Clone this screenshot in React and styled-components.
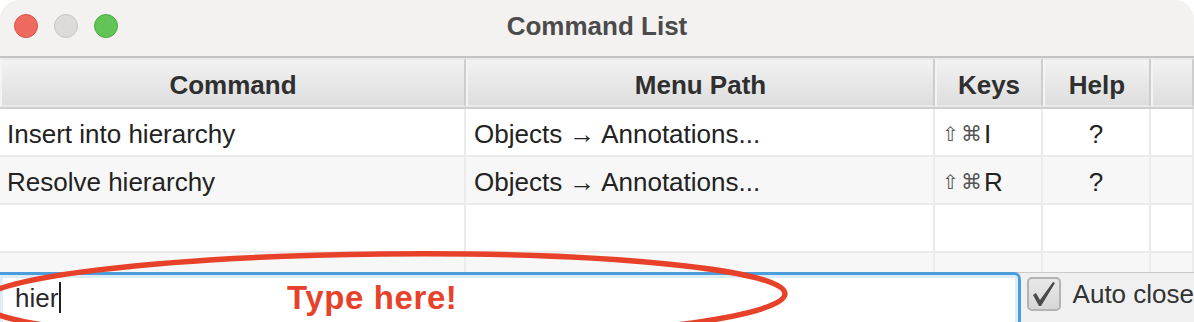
import React from "react";
import styled, { createGlobalStyle } from "styled-components";

const Global = createGlobalStyle`
  html, body { margin: 0; padding: 0; background: #ffffff; }
  body { font-family: "Liberation Sans", Arial, "DejaVu Sans", sans-serif; }
  * { box-sizing: border-box; }
`;

const Window = styled.div`
  position: relative;
  width: 1194px;
  height: 322px;
  overflow: hidden;
  display: flex;
  flex-direction: column;
  background: #f2f1f0;
  border-radius: 20px 20px 0 0;
`;

const TitleBar = styled.div`
  position: relative;
  height: 58px;
  flex: none;
  display: flex;
  align-items: center;
  justify-content: center;
  background: #f3f2f1;
  border-bottom: 2px solid #c3c3c3;
`;

const Lights = styled.div`
  position: absolute;
  left: 14px;
  top: 14px;
  display: flex;
  gap: 16px;
`;

const Light = styled.span`
  width: 24px;
  height: 24px;
  border-radius: 50%;
  background: ${(p) => p.$bg};
  border: 1px solid ${(p) => p.$bd};
`;

const Title = styled.div`
  font-size: 26px;
  font-weight: 700;
  color: #4b4b4b;
  margin-top: -3px;
`;

const TableArea = styled.div`
  height: 214px;
  flex: none;
  overflow: hidden;
  background: #ffffff;
`;

const cols = "466px 469px 108px 108px 1fr";

const HeaderRow = styled.div`
  display: grid;
  grid-template-columns: ${cols};
  height: 51px;
  border-bottom: 2px solid #cfcfcf;
  background: #d9d9d9;
`;

const HeaderCell = styled.div`
  display: flex;
  align-items: center;
  justify-content: center;
  font-size: 26px;
  font-weight: 700;
  color: #2f2f2f;
  background: linear-gradient(#f2f2f2, #dedede);
  border: 2px solid #e9e9e9;
  border-left-color: #f4f4f4;
  border-right: 2px solid #cdcdcd;
  padding-top: 5px;
`;

const BodyRow = styled.div`
  display: grid;
  grid-template-columns: ${cols};
  height: 48px;
  background: ${(p) => (p.$alt ? "#f7f7f7" : "#ffffff")};
  border-bottom: 2px solid #ebebeb;
`;

const Cell = styled.div`
  display: flex;
  align-items: center;
  justify-content: ${(p) => (p.$center ? "center" : "flex-start")};
  padding-left: ${(p) => (p.$center ? "0" : p.$pad || "7px")};
  padding-top: 4px;
  font-size: 26px;
  color: #222;
  border-right: 2px solid #ebebeb;
  white-space: pre;
  overflow: hidden;
`;

const Keys = styled.span`
  display: inline-flex;
  align-items: center;
`;

const KeySym = styled.span`
  font-family: "DejaVu Sans", sans-serif;
  font-size: ${(p) => p.$size || "22px"};
  font-weight: 300;
  color: #555;
  margin-right: 2px;
`;

const BottomBar = styled.div`
  height: 50px;
  flex: none;
  display: flex;
  align-items: flex-start;
  background: #f0f0f0;
  border-top: 1px solid #c8c8c8;
`;

const Field = styled.div`
  position: relative;
  width: 1024px;
  height: 56px;
  margin-left: -3px;
  margin-top: -1px;
  display: flex;
  align-items: flex-start;
  padding: 8px 0 0 15px;
  background: #ffffff;
  border: 3px solid #4b9edb;
  border-radius: 0 7px 7px 0;
  box-shadow: inset 0 0 0 3px #dcedf8;
  font-size: 26px;
  color: #2a2a2a;
`;

const Caret = styled.span`
  display: inline-block;
  width: 2px;
  height: 31px;
  margin-left: 1px;
  margin-top: -1px;
  background: #1f1f1f;
`;

const CheckWrap = styled.label`
  display: flex;
  align-items: center;
  gap: 12px;
  margin-left: 6px;
  margin-top: 4px;
  font-size: 26px;
  color: #333;
  white-space: nowrap;
`;

const CheckBox = styled.span`
  width: 34px;
  height: 34px;
  border-radius: 5px;
  border: 2px solid #b3b3b3;
  background: linear-gradient(#e9e9e9, #d6d6d6);
  display: flex;
  align-items: center;
  justify-content: center;
`;

const Overlay = styled.svg`
  position: absolute;
  left: 0;
  top: 0;
  pointer-events: none;
`;

const Callout = styled.div`
  position: absolute;
  left: 287px;
  top: 279px;
  font-size: 33px;
  font-weight: 700;
  color: #e8412a;
  letter-spacing: 0.6px;
  white-space: nowrap;
`;

const rows = [
  { cmd: "Insert into hierarchy", path: "Objects \u2192 Annotations...", key: "I" },
  { cmd: "Resolve hierarchy", path: "Objects \u2192 Annotations...", key: "R" },
  null,
  null,
];

export default function App() {
  return (
    <>
      <Global />
      <Window>
        <TitleBar>
          <Lights>
            <Light $bg="#ee6a5f" $bd="#d9534a" />
            <Light $bg="#dcdbda" $bd="#c6c5c4" />
            <Light $bg="#61c454" $bd="#4fa843" />
          </Lights>
          <Title>Command List</Title>
        </TitleBar>
        <TableArea>
          <HeaderRow>
            <HeaderCell>Command</HeaderCell>
            <HeaderCell>Menu Path</HeaderCell>
            <HeaderCell>Keys</HeaderCell>
            <HeaderCell>Help</HeaderCell>
            <HeaderCell />
          </HeaderRow>
          {rows.map((r, i) => (
            <BodyRow key={i} $alt={i % 2 === 1}>
              <Cell>{r ? r.cmd : ""}</Cell>
              <Cell $pad="8px">{r ? r.path : ""}</Cell>
              <Cell $pad="7px">
                {r ? (
                  <Keys>
                    <KeySym $size="20px">{"\u21E7"}</KeySym>
                    <KeySym $size="21px">{"\u2318"}</KeySym>
                    {r.key}
                  </Keys>
                ) : (
                  ""
                )}
              </Cell>
              <Cell $center>{r ? "?" : ""}</Cell>
              <Cell />
            </BodyRow>
          ))}
        </TableArea>
        <BottomBar>
          <Field>
            hier
            <Caret />
          </Field>
          <CheckWrap>
            <CheckBox>
              <svg width="24" height="26" viewBox="0 0 24 26">
                <path
                  d="M1 14 L4 12 L8 19 L21 1 L23 2 L9 25 L7 25 Z"
                  fill="#4a4a4a"
                />
              </svg>
            </CheckBox>
            Auto close
          </CheckWrap>
        </BottomBar>
        <Overlay width="1194" height="322" viewBox="0 0 1194 322">
          <ellipse
            cx="383"
            cy="298"
            rx="402"
            ry="44"
            transform="rotate(-0.6 383 298)"
            fill="none"
            stroke="#e8412a"
            strokeWidth="5.5"
          />
        </Overlay>
        <Callout>Type here!</Callout>
      </Window>
    </>
  );
}
